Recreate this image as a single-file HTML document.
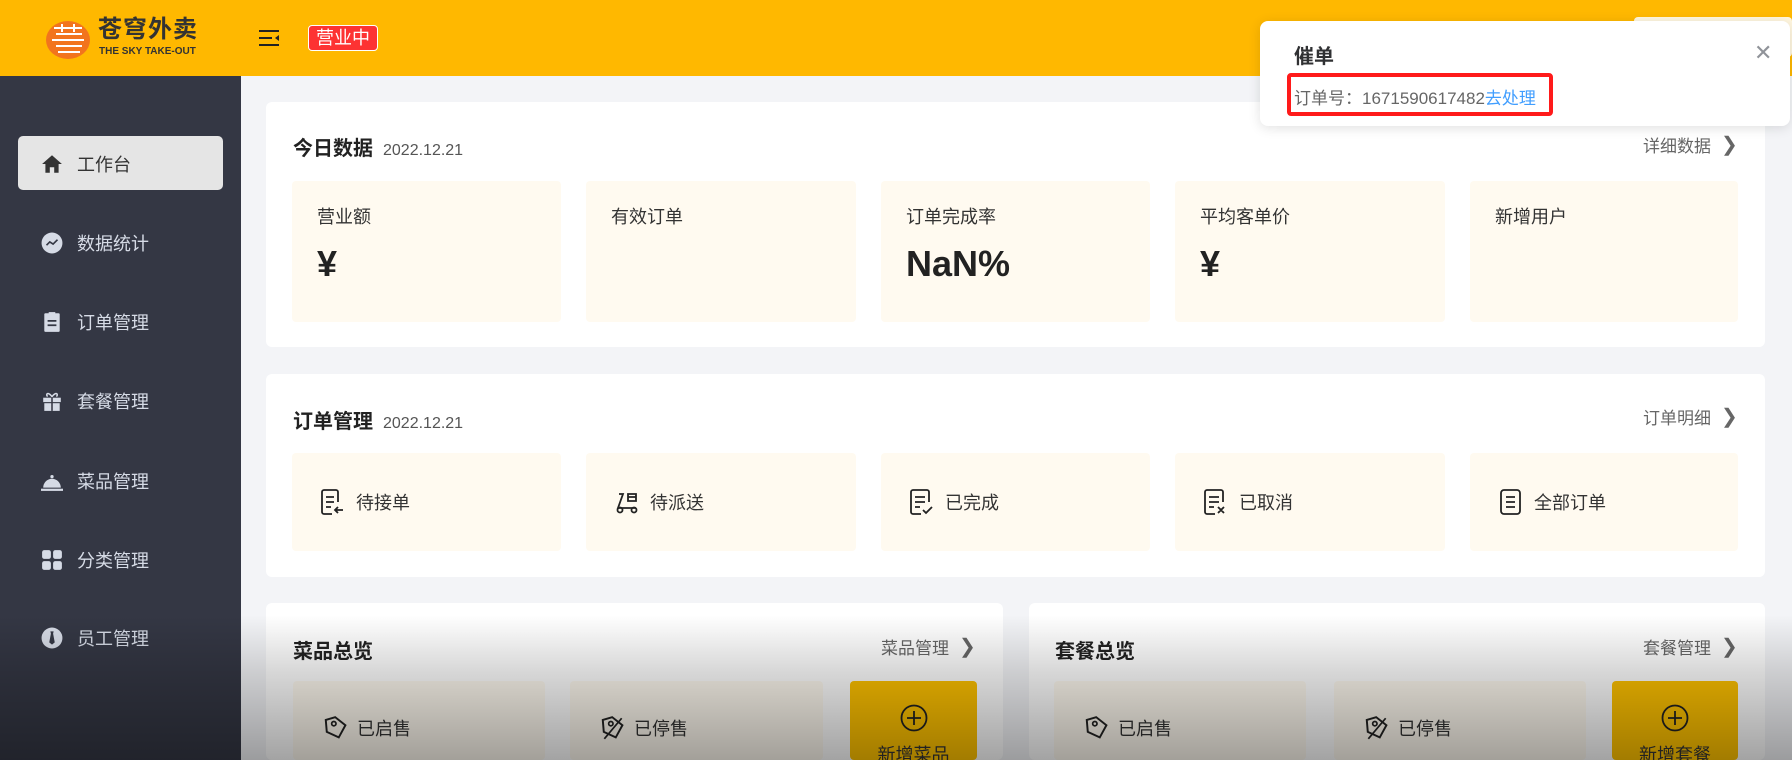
<!DOCTYPE html>
<html><head><meta charset="utf-8"><style>
*{margin:0;padding:0;box-sizing:border-box}
html{width:1792px;height:760px;overflow:hidden}
body{width:1792px;height:760px;overflow:hidden;background:#f3f4f7;font-family:"Liberation Sans","Noto Sans CJK SC",sans-serif;position:relative;color:#333}
.abs{position:absolute}
.header{left:0;top:0;width:1792px;height:76px;background:#ffb800}
.side{left:0;top:76px;width:241px;height:684px;background:#343744}
.mi{position:absolute;left:41px;font-size:18px;color:#d6dbe6;display:flex;align-items:center}
.mi svg{width:22px;height:22px;margin-right:14px}
.card{background:#fff;border-radius:6px}
.title{font-size:20px;font-weight:bold;color:#222}
.date{font-size:16px;color:#555;font-weight:normal;margin-left:10px}
.more{font-size:17px;color:#666;display:flex;align-items:center}
.box{position:absolute;background:#fffaf0;border-radius:4px}
.lbl{position:absolute;left:25px;top:22px;font-size:18px;color:#333}
.val{position:absolute;left:25px;top:62px;font-size:36px;font-weight:bold;color:#222}
.ob{display:flex;align-items:center;justify-content:flex-start;padding-left:28px;font-size:18px;color:#333}
.ob svg{width:26px;height:28px;margin-right:10px}
.gb{position:absolute;background:#fffaf0;border-radius:4px;display:flex;align-items:center;padding-left:30px;font-size:18px;color:#333}
.gb svg{margin-right:8px}
.add{position:absolute;background:#ffc200;border-radius:4px;text-align:center;font-size:18px;color:#333}
</style></head><body>
<div class="abs header"></div>
<svg class="abs" style="left:44px;top:18px" width="48" height="42" viewBox="0 0 48 42"><ellipse cx="24" cy="22" rx="22" ry="19" fill="#f2741d"/><g stroke="#fff" stroke-width="2" fill="none"><path d="M10 10h28M12 16h26M8 22h32M12 28h26M14 34h22M18 6v8M30 6v8"/></g></svg>
<div class="abs" style="left:98px;top:16px;font-size:24px;line-height:28px;font-weight:bold;color:#333;letter-spacing:1px">苍穹外卖</div>
<div class="abs" style="left:99px;top:46px;font-size:10px;line-height:12px;font-weight:bold;color:#333">THE SKY TAKE-OUT</div>
<svg class="abs" style="left:258px;top:29px" width="22" height="18" viewBox="0 0 22 18"><g stroke="#222" stroke-width="2"><path d="M1 2h20M1 9h13M1 16h20"/></g><path d="M21 6l-4 3 4 3z" fill="#222"/></svg>
<div class="abs" style="left:308px;top:25px;width:70px;height:26px;background:#fd3333;border:1px solid #fff;border-radius:4px;color:#fff;font-size:18px;text-align:center;line-height:24px">营业中</div>
<div class="abs" style="left:1634px;top:17px;width:158px;height:40px;background:#fff6df;border-radius:4px"></div>

<div class="abs side"></div>
<div class="abs" style="left:18px;top:136px;width:205px;height:54px;background:#e5e5e5;border-radius:5px"></div>
<div class="mi" style="top:151px;color:#333"><svg viewBox="0 0 20 20"><path d="M10 2L1 10h3v8h4v-5h4v5h4v-8h3z" fill="#333"/></svg>工作台</div>
<div class="mi" style="top:230px"><svg viewBox="0 0 20 20"><circle cx="10" cy="10" r="9.5" fill="#d6dbe6"/><path d="M5 12l3-3 3 2 4-4" stroke="#343744" stroke-width="1.5" fill="none"/></svg>数据统计</div>
<div class="mi" style="top:309px"><svg viewBox="0 0 20 20"><rect x="3" y="2" width="14" height="17" rx="1" fill="#d6dbe6"/><rect x="7" y="1" width="6" height="3" fill="#d6dbe6"/><path d="M6 9h8M6 13h8" stroke="#343744" stroke-width="1.6"/></svg>订单管理</div>
<div class="mi" style="top:388px"><svg viewBox="0 0 20 20"><rect x="2" y="7" width="16" height="4" fill="#d6dbe6"/><rect x="3" y="12" width="14" height="7" fill="#d6dbe6"/><path d="M10 7v12" stroke="#343744" stroke-width="1.4"/><path d="M10 6C6 1 4 4 6 6M10 6c4-5 6-2 4 0" stroke="#d6dbe6" fill="none" stroke-width="1.4"/></svg>套餐管理</div>
<div class="mi" style="top:468px"><svg viewBox="0 0 20 20"><path d="M2 16a8 8 0 0 1 16 0z" fill="#d6dbe6"/><rect x="0" y="17" width="20" height="2" fill="#d6dbe6"/><circle cx="10" cy="6" r="1.5" fill="#d6dbe6"/></svg>菜品管理</div>
<div class="mi" style="top:547px"><svg viewBox="0 0 20 20" fill="#d6dbe6"><rect x="1" y="1" width="8" height="8" rx="2"/><rect x="11" y="1" width="8" height="8" rx="2"/><rect x="1" y="11" width="8" height="8" rx="2"/><rect x="11" y="11" width="8" height="8" rx="2"/></svg>分类管理</div>
<div class="mi" style="top:625px"><svg viewBox="0 0 20 20"><circle cx="10" cy="10" r="9.5" fill="#d6dbe6"/><path d="M8.5 4h3l-.5 2 1.5 8-2.5 2-2.5-2 1.5-8z" fill="#343744"/></svg>员工管理</div>

<div class="abs card" style="left:266px;top:102px;width:1499px;height:245px"></div>
<div class="abs title" style="left:293px;top:132px">今日数据<span class="date">2022.12.21</span></div>
<div class="abs more" style="left:1643px;top:132px">详细数据<span style="margin-left:10px;font-size:20px">&#x276F;</span></div>
<div class="box" style="left:292px;top:181px;width:269px;height:141px"><div class="lbl">营业额</div><div class="val">¥</div></div>
<div class="box" style="left:586px;top:181px;width:270px;height:141px"><div class="lbl">有效订单</div></div>
<div class="box" style="left:881px;top:181px;width:269px;height:141px"><div class="lbl">订单完成率</div><div class="val">NaN%</div></div>
<div class="box" style="left:1175px;top:181px;width:270px;height:141px"><div class="lbl">平均客单价</div><div class="val">¥</div></div>
<div class="box" style="left:1470px;top:181px;width:268px;height:141px"><div class="lbl">新增用户</div></div>

<div class="abs card" style="left:266px;top:374px;width:1499px;height:203px"></div>
<div class="abs title" style="left:293px;top:405px">订单管理<span class="date">2022.12.21</span></div>
<div class="abs more" style="left:1643px;top:404px">订单明细<span style="margin-left:10px;font-size:20px">&#x276F;</span></div>
<div class="box ob" style="left:292px;top:453px;width:269px;height:98px"><svg viewBox="0 0 26 28" fill="none" stroke="#222" stroke-width="1.8"><path d="M18 14V4a2 2 0 0 0-2-2H4a2 2 0 0 0-2 2v20a2 2 0 0 0 2 2h8"/><path d="M6 9h8M6 14h8M6 19h5M23 22h-8M18 19l-3 3 3 3"/></svg>待接单</div>
<div class="box ob" style="left:586px;top:453px;width:270px;height:98px"><svg viewBox="0 0 26 28" fill="none" stroke="#222" stroke-width="1.8"><path d="M5 6h4l-5 14h18M14 6h8v7h-8zM14 9h8"/><circle cx="6" cy="22" r="2.5"/><circle cx="20" cy="22" r="2.5"/></svg>待派送</div>
<div class="box ob" style="left:881px;top:453px;width:269px;height:98px"><svg viewBox="0 0 26 28" fill="none" stroke="#222" stroke-width="1.8"><path d="M20 14V4a2 2 0 0 0-2-2H4a2 2 0 0 0-2 2v20a2 2 0 0 0 2 2h8"/><path d="M6 9h10M6 14h10M6 19h5M14 22l3 3 6-6"/></svg>已完成</div>
<div class="box ob" style="left:1175px;top:453px;width:270px;height:98px"><svg viewBox="0 0 26 28" fill="none" stroke="#222" stroke-width="1.8"><path d="M20 14V4a2 2 0 0 0-2-2H4a2 2 0 0 0-2 2v20a2 2 0 0 0 2 2h8"/><path d="M6 9h10M6 14h10M6 19h5M15 19l6 6M21 19l-6 6"/></svg>已取消</div>
<div class="box ob" style="left:1470px;top:453px;width:268px;height:98px"><svg viewBox="0 0 26 28" fill="none" stroke="#222" stroke-width="1.8"><rect x="3" y="2" width="19" height="24" rx="3"/><path d="M8 9h9M8 14h9M8 19h9"/></svg>全部订单</div>

<div class="abs card" style="left:266px;top:603px;width:737px;height:157px"></div>
<div class="abs card" style="left:1029px;top:603px;width:736px;height:157px"></div>
<div class="abs title" style="left:293px;top:635px">菜品总览</div>
<div class="abs more" style="left:881px;top:634px">菜品管理<span style="margin-left:10px;font-size:20px">&#x276F;</span></div>
<div class="abs title" style="left:1055px;top:635px">套餐总览</div>
<div class="abs more" style="left:1643px;top:634px">套餐管理<span style="margin-left:10px;font-size:20px">&#x276F;</span></div>
<svg width="0" height="0" style="position:absolute"><defs>
<g id="tag"><path d="M4 3l9-1 8 9-8 10L3 14z" transform="rotate(-10 12 12)" fill="none" stroke="#222" stroke-width="1.8"/><circle cx="10" cy="8" r="2" fill="none" stroke="#222" stroke-width="1.6"/></g>
</defs></svg>
<div class="gb" style="left:293px;top:681px;width:252px;height:79px;align-items:flex-start;padding-top:34px"><svg width="26" height="26" viewBox="0 0 24 24"><use href="#tag"/></svg>已启售</div>
<div class="gb" style="left:570px;top:681px;width:253px;height:79px;align-items:flex-start;padding-top:34px"><svg width="26" height="26" viewBox="0 0 24 24"><use href="#tag"/><path d="M4 22L20 3" stroke="#222" stroke-width="1.6"/></svg>已停售</div>
<div class="add" style="left:850px;top:681px;width:127px;height:79px"><svg style="margin-top:23px" width="28" height="28" viewBox="0 0 28 28" fill="none" stroke="#222" stroke-width="1.8"><circle cx="14" cy="14" r="12.5"/><path d="M14 7v14M7 14h14"/></svg><div style="margin-top:4px">新增菜品</div></div>
<div class="gb" style="left:1054px;top:681px;width:252px;height:79px;align-items:flex-start;padding-top:34px"><svg width="26" height="26" viewBox="0 0 24 24"><use href="#tag"/></svg>已启售</div>
<div class="gb" style="left:1334px;top:681px;width:252px;height:79px;align-items:flex-start;padding-top:34px"><svg width="26" height="26" viewBox="0 0 24 24"><use href="#tag"/><path d="M4 22L20 3" stroke="#222" stroke-width="1.6"/></svg>已停售</div>
<div class="add" style="left:1612px;top:681px;width:126px;height:79px"><svg style="margin-top:23px" width="28" height="28" viewBox="0 0 28 28" fill="none" stroke="#222" stroke-width="1.8"><circle cx="14" cy="14" r="12.5"/><path d="M14 7v14M7 14h14"/></svg><div style="margin-top:4px">新增套餐</div></div>

<div class="abs" style="left:0;top:615px;width:1792px;height:145px;background:linear-gradient(to bottom,rgba(0,0,0,0) 0%,rgba(0,0,0,0.16) 40%,rgba(0,0,0,0.36) 100%)"></div>

<div class="abs" style="left:1260px;top:21px;width:530px;height:105px;background:#fff;border-radius:8px;box-shadow:0 2px 12px rgba(0,0,0,0.12)"></div>
<div class="abs" style="left:1294px;top:40px;font-size:20px;font-weight:bold;color:#303133">催单</div>
<div class="abs" style="left:1754px;top:42px;font-size:22px;color:#909399;line-height:22px">✕</div>
<div class="abs" style="left:1287px;top:73px;width:266px;height:43px;border:4px solid #ff1a1a;border-radius:4px"></div>
<div class="abs" style="left:1294px;top:84px;font-size:17px;color:#666">订单号：1671590617482<span style="color:#419eff">去处理</span></div>
</body></html>
